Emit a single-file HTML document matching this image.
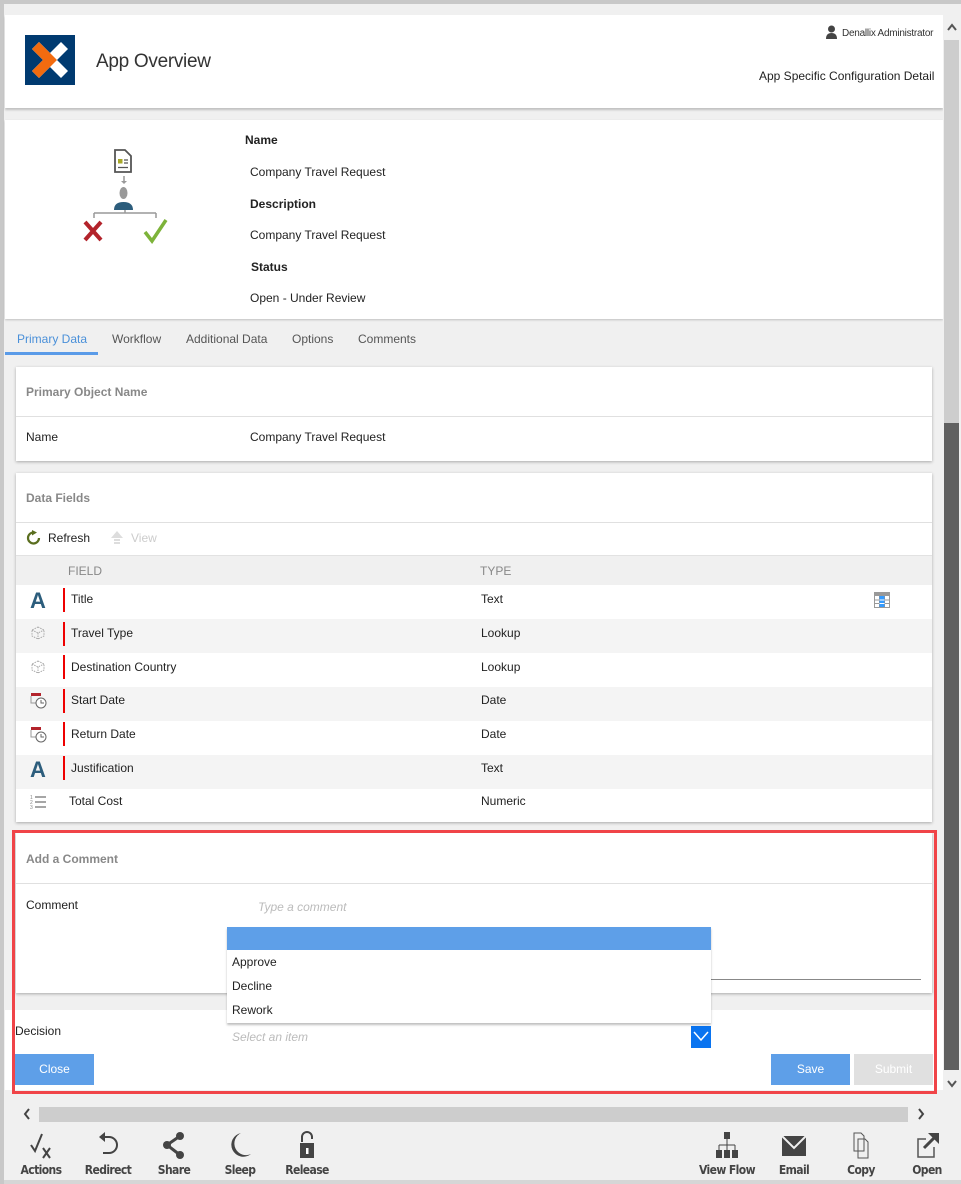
<!DOCTYPE html>
<html><head><meta charset="utf-8"><style>
*{margin:0;padding:0;box-sizing:border-box}
body{width:961px;height:1184px;background:#f0f0f0;font-family:"Liberation Sans",Arial,sans-serif;font-size:12px;color:#222;position:relative;overflow:hidden}
.a{position:absolute}
.card{position:absolute;background:#fff;box-shadow:0 1px 3px rgba(0,0,0,.3)}
.t{position:absolute;white-space:nowrap}
.lbl{font-weight:bold;color:#888}
.tb{position:absolute;top:1131px;text-align:center;font-family:"DejaVu Sans Condensed","DejaVu Sans",sans-serif;font-weight:bold;font-size:12px;color:#444;letter-spacing:-0.6px;white-space:nowrap}
.tb svg{display:block;margin:0 auto 4px}
</style></head><body>
<div class="a" style="left:0;top:0;width:961px;height:4px;background:#c8c8c8"></div>
<div class="a" style="left:0;top:0;width:4px;height:1184px;background:#c8c8c8"></div>
<!-- header -->
<div class="a" style="left:5px;top:15px;width:938px;height:93px;background:#fff;box-shadow:0 2px 2px rgba(0,0,0,.2)"></div>
<svg class="a" style="left:25px;top:35px" width="50" height="50" viewBox="0 0 50 50"><rect width="50" height="50" fill="#003a70"/><path d="M7 14 L14 7 L43 36 L36 43 Z" fill="#fff"/><path d="M36 7 L43 14 L14 43 L7 36 Z" fill="#fff"/><path d="M7 14 L14 7 L32 25 L14 43 L7 36 L18 25 Z" fill="#f26b0f"/></svg>
<div class="t" style="left:96px;top:51px;font-size:19px;color:#333;letter-spacing:-0.3px">App Overview</div>
<svg class="a" style="left:826px;top:25px" width="11" height="14" viewBox="0 0 11 14"><circle cx="5.5" cy="4" r="3.5" fill="#444"/><path d="M0 14 Q0 8 5.5 8 Q11 8 11 14Z" fill="#444"/></svg>
<div class="t" style="left:842px;top:28px;font-size:10px;color:#333;letter-spacing:-0.25px">Denallix Administrator</div>
<div class="t" style="left:759px;top:69px;color:#222">App Specific Configuration Detail</div>
<!-- info -->
<div class="a" style="left:5px;top:120px;width:938px;height:199px;background:#fff;box-shadow:0 1px 2px rgba(0,0,0,.2)"></div>
<svg class="a" style="left:80px;top:148px" width="90" height="98" viewBox="0 0 90 98">
<path d="M35 2 h10 l6 6 v16 h-16z" fill="#fff" stroke="#555" stroke-width="1.8"/><rect x="38" y="11" width="4.5" height="4.5" fill="#a8a82a"/><path d="M44 12h4M44 15h4M38 19.5h10" stroke="#555" stroke-width="1.3"/>
<path d="M44 28v6" stroke="#999" stroke-width="1.5"/><path d="M41 33 l3 3 l3-3" fill="#999"/>
<ellipse cx="43.5" cy="45" rx="4" ry="6" fill="#999"/><path d="M34 62 q0-8 9.5-8 q9.5 0 9.5 8z" fill="#2c5d7c"/>
<path d="M14 65h62M14 65v5M76 65v5M45 62v3" stroke="#999" stroke-width="1.5"/>
<path d="M5 74 l16 18 M21 74 L5 92" stroke="#b3232b" stroke-width="4"/>
<path d="M65 84 l7 9 l14-21" stroke="#7db33a" stroke-width="3.5" fill="none"/></svg>
<div class="t" style="left:245px;top:133px;font-weight:bold">Name</div>
<div class="t" style="left:250px;top:165px">Company Travel Request</div>
<div class="t" style="left:250px;top:197px;font-weight:bold">Description</div>
<div class="t" style="left:250px;top:228px">Company Travel Request</div>
<div class="t" style="left:251px;top:260px;font-weight:bold">Status</div>
<div class="t" style="left:250px;top:291px">Open - Under Review</div>
<!-- tabs -->
<div class="t" style="left:17px;top:332px;color:#4a90d9">Primary Data</div>
<div class="a" style="left:5px;top:352px;width:93px;height:3px;background:#5a9be8"></div>
<div class="t" style="left:112px;top:332px;color:#555">Workflow</div>
<div class="t" style="left:186px;top:332px;color:#555">Additional Data</div>
<div class="t" style="left:292px;top:332px;color:#555">Options</div>
<div class="t" style="left:358px;top:332px;color:#555">Comments</div>
<!-- primary card -->
<div class="card" style="left:16px;top:367px;width:916px;height:94px"></div>
<div class="t lbl" style="left:26px;top:385px">Primary Object Name</div>
<div class="a" style="left:16px;top:416px;width:916px;height:1px;background:#e0e0e0"></div>
<div class="t" style="left:26px;top:430px">Name</div>
<div class="t" style="left:250px;top:430px">Company Travel Request</div>
<!-- data fields -->
<div class="card" style="left:16px;top:473px;width:916px;height:349px"></div>
<div class="t lbl" style="left:26px;top:491px">Data Fields</div>
<div class="a" style="left:16px;top:522px;width:916px;height:1px;background:#e0e0e0"></div>
<svg class="a" style="left:26px;top:530px" width="16" height="16" viewBox="0 0 16 16"><path d="M13 8 A5.5 5.5 0 1 1 8 2.5" stroke="#5a6e1f" stroke-width="2.2" fill="none"/><path d="M6 0 l5 2.5 l-5 3z" fill="#5a6e1f"/></svg>
<div class="t" style="left:48px;top:531px">Refresh</div>
<svg class="a" style="left:110px;top:530px" width="14" height="16" viewBox="0 0 14 16"><path d="M7 1 L13 8 H1Z M4 9h6v2H4z M4 12h6v2H4z" fill="#ddd"/></svg>
<div class="t" style="left:131px;top:531px;color:#ccc">View</div>
<div class="a" style="left:16px;top:555px;width:916px;height:30px;background:#f0f0f0;border-top:1px solid #e2e2e2"></div>
<div class="t" style="left:68px;top:564px;color:#888">FIELD</div>
<div class="t" style="left:480px;top:564px;color:#888">TYPE</div>
<div class="a" style="left:16px;top:619px;width:916px;height:34px;background:#f4f4f4"></div>
<div class="a" style="left:16px;top:687px;width:916px;height:34px;background:#f4f4f4"></div>
<div class="a" style="left:16px;top:755px;width:916px;height:34px;background:#f4f4f4"></div>
<div class="t" style="left:30px;top:588px;font-size:22px;font-weight:bold;color:#2c5d7c">A</div>
<div class="t" style="left:30px;top:757px;font-size:22px;font-weight:bold;color:#2c5d7c">A</div>
<svg class="a" style="left:31px;top:626px" width="14" height="14"><path d="M7 1 L13 4 V10 L7 13 L1 10 V4Z M1 4 L7 7 L13 4 M7 7 V13" stroke="#aaa" stroke-dasharray="1.5 1" fill="none"/></svg>
<svg class="a" style="left:31px;top:660px" width="14" height="14"><path d="M7 1 L13 4 V10 L7 13 L1 10 V4Z M1 4 L7 7 L13 4 M7 7 V13" stroke="#aaa" stroke-dasharray="1.5 1" fill="none"/></svg>
<svg class="a" style="left:30px;top:692px" width="18" height="17"><rect x="1" y="1" width="10" height="3" fill="#b3232b"/><path d="M1 4v7h5" stroke="#999" fill="none"/><circle cx="11" cy="11" r="5" fill="#fff" stroke="#666"/><path d="M11 8v3h3" stroke="#666" fill="none"/></svg>
<svg class="a" style="left:30px;top:726px" width="18" height="17"><rect x="1" y="1" width="10" height="3" fill="#b3232b"/><path d="M1 4v7h5" stroke="#999" fill="none"/><circle cx="11" cy="11" r="5" fill="#fff" stroke="#666"/><path d="M11 8v3h3" stroke="#666" fill="none"/></svg>
<svg class="a" style="left:30px;top:794px" width="18" height="16"><text x="0" y="5" font-size="5" fill="#888">1</text><text x="0" y="10" font-size="5" fill="#888">2</text><text x="0" y="15" font-size="5" fill="#888">3</text><path d="M5 3h11M5 8h11M5 13h11" stroke="#888" stroke-width="1.5"/></svg>
<div class="a" style="left:63px;top:588px;width:2px;height:24px;background:#e00"></div>
<div class="a" style="left:63px;top:622px;width:2px;height:24px;background:#e00"></div>
<div class="a" style="left:63px;top:655px;width:2px;height:24px;background:#e00"></div>
<div class="a" style="left:63px;top:689px;width:2px;height:24px;background:#e00"></div>
<div class="a" style="left:63px;top:722px;width:2px;height:24px;background:#e00"></div>
<div class="a" style="left:63px;top:756px;width:2px;height:24px;background:#e00"></div>
<div class="t" style="left:71px;top:592px">Title</div><div class="t" style="left:481px;top:592px">Text</div>
<div class="t" style="left:71px;top:626px">Travel Type</div><div class="t" style="left:481px;top:626px">Lookup</div>
<div class="t" style="left:71px;top:660px">Destination Country</div><div class="t" style="left:481px;top:660px">Lookup</div>
<div class="t" style="left:71px;top:693px">Start Date</div><div class="t" style="left:481px;top:693px">Date</div>
<div class="t" style="left:71px;top:727px">Return Date</div><div class="t" style="left:481px;top:727px">Date</div>
<div class="t" style="left:71px;top:761px">Justification</div><div class="t" style="left:481px;top:761px">Text</div>
<div class="t" style="left:69px;top:794px">Total Cost</div><div class="t" style="left:481px;top:794px">Numeric</div>
<svg class="a" style="left:874px;top:592px" width="16" height="16"><rect width="16" height="16" fill="#999"/><rect x="1" y="4" width="14" height="11" fill="#fff"/><path d="M1 8h14M1 11.5h14M5.5 4v11M10.5 4v11" stroke="#999"/><rect x="5.5" y="4" width="5" height="11" fill="#1e90ff" opacity=".9"/><path d="M5.5 8h5M5.5 11.5h5" stroke="#fff"/></svg>
<!-- comment -->
<div class="a" style="left:5px;top:993px;width:938px;height:107px;background:#f0f0f0"></div>
<div class="a" style="left:5px;top:1010px;width:938px;height:80px;background:#fff"></div>
<div class="card" style="left:16px;top:833px;width:916px;height:160px"></div>
<div class="t lbl" style="left:26px;top:852px">Add a Comment</div>
<div class="a" style="left:16px;top:883px;width:916px;height:1px;background:#e0e0e0"></div>
<div class="t" style="left:26px;top:898px">Comment</div>
<div class="t" style="left:258px;top:900px;font-style:italic;color:#bbb">Type a comment</div>
<div class="a" style="left:710px;top:979px;width:211px;height:1px;background:#888"></div>
<div class="t" style="left:15px;top:1024px">Decision</div>
<div class="t" style="left:232px;top:1030px;font-style:italic;color:#bbb">Select an item</div>
<div class="a" style="left:691px;top:1026px;width:20px;height:22px;background:#0a74f0"></div>
<svg class="a" style="left:693px;top:1030px" width="16" height="12"><path d="M1 2 L8 10 L15 2" stroke="#fff" stroke-width="1.5" fill="none"/></svg>
<div class="a" style="left:227px;top:927px;width:484px;height:96px;background:#fff;box-shadow:0 2px 2px rgba(0,0,0,.25)"></div>
<div class="a" style="left:227px;top:927px;width:484px;height:23px;background:#5e9fe8"></div>
<div class="t" style="left:232px;top:955px">Approve</div>
<div class="t" style="left:232px;top:979px">Decline</div>
<div class="t" style="left:232px;top:1003px">Rework</div>
<div class="a" style="left:15px;top:1054px;width:79px;height:31px;background:#5e9fe8;color:#fff;text-align:center;line-height:31px">Close</div>
<div class="a" style="left:771px;top:1054px;width:79px;height:31px;background:#5e9fe8;color:#fff;text-align:center;line-height:31px">Save</div>
<div class="a" style="left:854px;top:1054px;width:79px;height:31px;background:#e0e0e0;color:#fff;text-align:center;line-height:31px">Submit</div>
<div class="a" style="left:12px;top:830px;width:925px;height:264px;border:3px solid #f04448"></div>
<!-- scrollbar -->
<div class="a" style="left:943px;top:15px;width:17px;height:1080px;background:#f0f0f0"></div>
<div class="a" style="left:944px;top:40px;width:15px;height:383px;background:#cdcdcd"></div>
<div class="a" style="left:944px;top:423px;width:15px;height:647px;background:#606060"></div>
<svg class="a" style="left:946px;top:22px" width="12" height="10"><path d="M2 8 L6 3 L10 8" stroke="#555" stroke-width="2" fill="none"/></svg>
<svg class="a" style="left:946px;top:1079px" width="12" height="10"><path d="M2 2 L6 7 L10 2" stroke="#555" stroke-width="2" fill="none"/></svg>
<!-- bottom -->
<svg class="a" style="left:22px;top:1108px" width="10" height="12"><path d="M7 1 L3 6 L7 11" stroke="#444" stroke-width="2" fill="none"/></svg>
<div class="a" style="left:39px;top:1107px;width:869px;height:15px;background:#cdcdcd"></div>
<svg class="a" style="left:916px;top:1108px" width="10" height="12"><path d="M3 1 L7 6 L3 11" stroke="#444" stroke-width="2" fill="none"/></svg>
<div class="a" style="left:4px;top:1180px;width:957px;height:4px;background:#d6d6d6"></div>
<div class="tb" style="left:14px;width:54px"><svg width="26" height="28"><path d="M3 14 l4 6 l7-17" stroke="#444" stroke-width="2" fill="none"/><path d="M15 17 l7 10 M22 17 l-7 10" stroke="#444" stroke-width="2"/></svg>Actions</div>
<div class="tb" style="left:78px;width:60px"><svg width="26" height="28"><path d="M10 6 h4 a8 8 0 0 1 0 16 h-6" stroke="#444" stroke-width="2" fill="none"/><path d="M4 6 l6-5 v10z" fill="#444"/></svg>Redirect</div>
<div class="tb" style="left:149px;width:50px"><svg width="26" height="28"><circle cx="19" cy="5" r="4" fill="#444"/><circle cx="6" cy="14" r="4" fill="#444"/><circle cx="19" cy="24" r="4" fill="#444"/><path d="M19 5 L6 14 L19 24" stroke="#444" stroke-width="3" fill="none"/></svg>Share</div>
<div class="tb" style="left:215px;width:50px"><svg width="26" height="28"><path d="M14 2 a12 12 0 1 0 10 21 a10 10 0 0 1 -10 -21z" fill="#444"/></svg>Sleep</div>
<div class="tb" style="left:277px;width:60px"><svg width="26" height="28"><path d="M8 11 v-5 a5 5 0 0 1 10 0 v2" stroke="#444" stroke-width="2" fill="none"/><rect x="6" y="12" width="14" height="15" fill="#444"/><rect x="12" y="17" width="2.5" height="6" fill="#fff"/></svg>Release</div>
<div class="tb" style="left:692px;width:70px"><svg width="26" height="28"><rect x="10" y="1" width="6" height="7" fill="#444"/><path d="M13 8v6M5 14h16M5 14v5M13 14v5M21 14v5" stroke="#444"/><rect x="2" y="19" width="6" height="8" fill="#444"/><rect x="10" y="19" width="6" height="8" fill="#444"/><rect x="18" y="19" width="6" height="8" fill="#444"/></svg>View Flow</div>
<div class="tb" style="left:769px;width:50px"><svg width="26" height="28"><rect x="1" y="5" width="24" height="20" fill="#444"/><path d="M1 5 L13 17 L25 5" stroke="#f0f0f0" stroke-width="2" fill="none"/></svg>Email</div>
<div class="tb" style="left:836px;width:50px"><svg width="26" height="28"><path d="M6 2 h7 l3 3 v15 h-10z M10 8 h7 l3 3 v16 h-10z" stroke="#555" fill="#f0f0f0"/></svg>Copy</div>
<div class="tb" style="left:902px;width:50px"><svg width="26" height="28"><path d="M12 8 H4 V26 H20 V16" stroke="#555" stroke-width="1.5" fill="none"/><path d="M10 17 L22 5" stroke="#444" stroke-width="3"/><path d="M14 2 H25 V13z" fill="#444"/></svg>Open</div>
</body></html>
